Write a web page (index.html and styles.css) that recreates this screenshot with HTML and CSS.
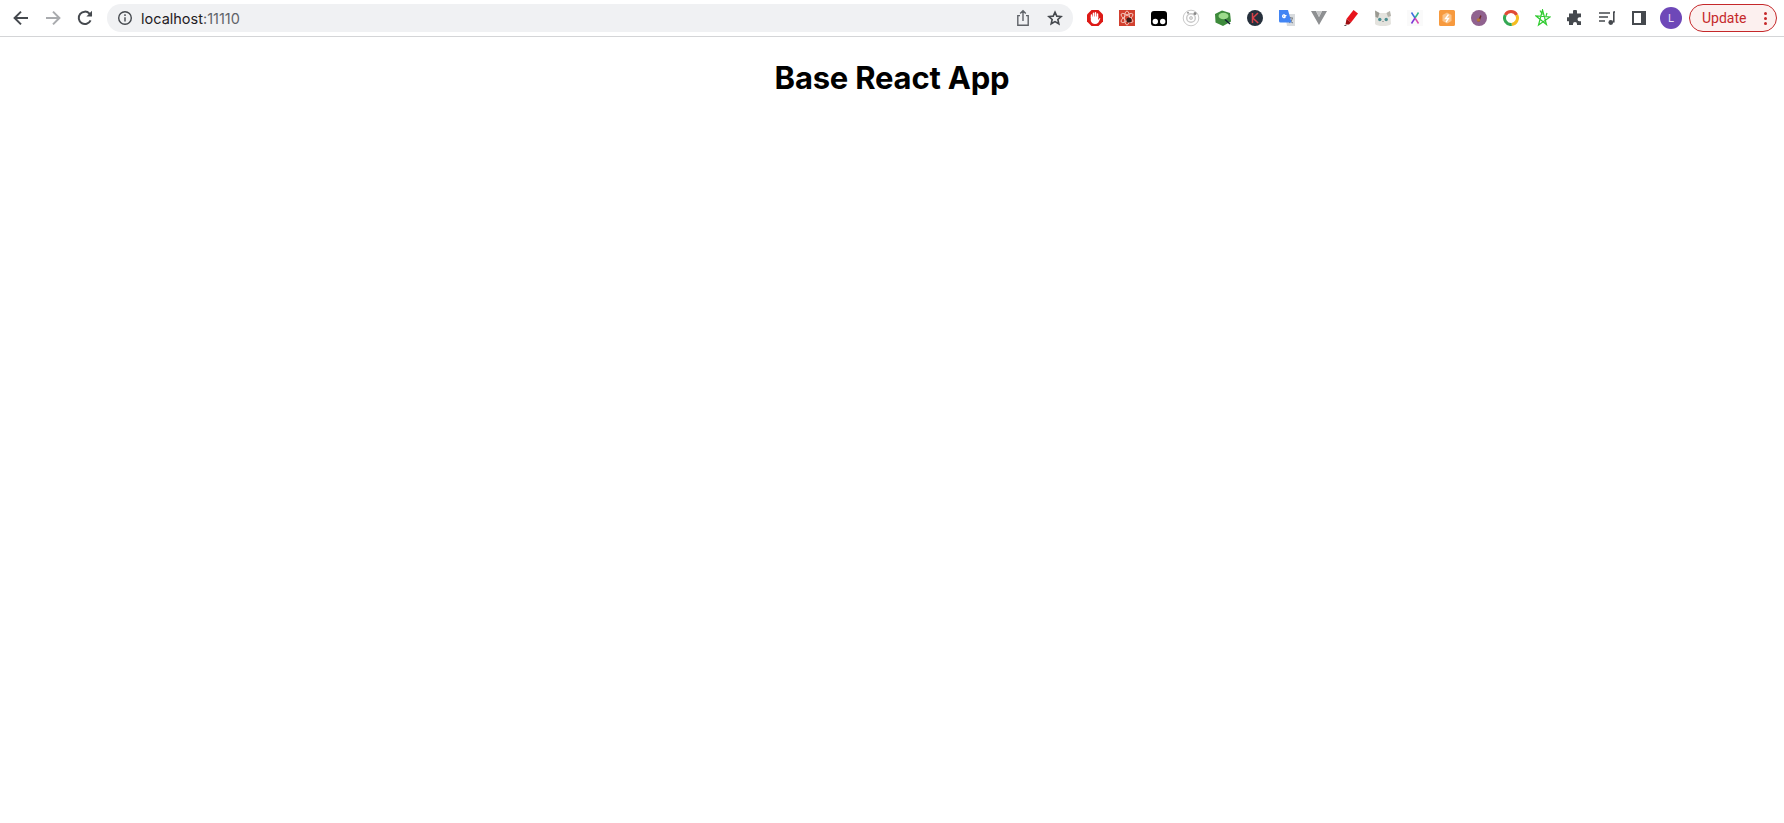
FILE: index.html
```html
<!DOCTYPE html>
<html lang="en">
<head>
    <meta charset="UTF-8">
    <title>Base React App</title>
    <link rel="stylesheet" href="styles.css">
</head>
<body>
    <div class="toolbar">
        <div class="nav">
            <span class="btn"><svg width="18" height="18" viewBox="0 0 18 18" fill="none" stroke="#45494e" stroke-width="2"><path d="M16 9H3M9 2.600 2.600 9 9 15.400"/></svg></span>
            <span class="btn"><svg width="18" height="18" viewBox="0 0 18 18" fill="none" stroke="#a9abae" stroke-width="2"><path d="M2 9h13M9 2.600 15.400 9 9 15.400"/></svg></span>
            <span class="btn"><svg width="18" height="18" viewBox="0 0 18 18" fill="none" stroke="#45494e" stroke-width="2"><path d="M14.600 11.400A6.200 6.200 0 1 1 13.500 4.600L15.600 6.600"/><path d="M16 1.800v5.600h-5.600" fill="#45494e" stroke="none"/></svg></span>
        </div>
        <div class="omnibox">
            <svg class="info" width="16" height="16" viewBox="0 0 16 16" fill="none" stroke="#45494e" stroke-width="1.400"><circle cx="8" cy="8" r="6.300"/><path d="M8 7.200v4.200M8 4.200v1.700"/></svg>
            <span class="url">localhost<span class="port">:11110</span></span>
            <span class="omni-right">
                <svg width="16" height="18" viewBox="0 0 16 18" fill="none" stroke="#5f6368" stroke-width="1.400"><path d="M5 6.600H2.800v9.600h10.400V6.600H11M8 12V2M5.200 4.600 8 1.800l2.800 2.800"/></svg>
                <svg width="16" height="16" viewBox="0 0 18 18" fill="none" stroke="#45494e" stroke-width="1.800"><path d="m9 2.400 2 4.500 4.900.5-3.700 3.300 1.100 4.800L9 13l-4.300 2.500 1.100-4.800L2.100 7.400l4.900-.5z"/></svg>
            </span>
        </div>
        <div class="extensions">
            <span class="ext"><svg width="18" height="18" viewBox="0 0 18 18"><path d="M5.500 1h7L17 5.500v7L12.500 17h-7L1 12.500v-7z" fill="#dd1a16"/><path d="M5.500 8.500V6M7.500 8V4.200M9.500 8V3.800M11.500 8.500V5" fill="none" stroke="#fff" stroke-width="1.500" stroke-linecap="round"/><path d="M4.800 7.500h7.400v3.500l1.500-2 .7.500-2 4Q11 15 9 15q-3 0-4.200-3z" fill="#fff"/></svg></span>
            <span class="ext"><svg width="16" height="16" viewBox="0 0 16 16"><path d="M0 0h16v16H0z" fill="#d2402f"/><g fill="none" stroke="#f5c9c0" stroke-width=".9"><ellipse cx="8" cy="8" rx="7" ry="2.600" transform="rotate(35 8 8)"/><ellipse cx="8" cy="8" rx="7" ry="2.600" transform="rotate(-35 8 8)"/><ellipse cx="8" cy="8" rx="7" ry="2.600" transform="rotate(90 8 8)"/></g><circle cx="10" cy="10" r="2.600" fill="#3b1c18"/></svg></span>
            <span class="ext"><svg width="18" height="16" viewBox="0 0 18 16"><path d="M4 1h10a3 3 0 0 1 3 3v9a3 3 0 0 1-3 3H4a3 3 0 0 1-3-3V4a3 3 0 0 1 3-3z" fill="#000"/><circle cx="5.300" cy="11.500" r="2.700" fill="#fff"/><circle cx="12.700" cy="11.500" r="2.700" fill="#fff"/></svg></span>
            <span class="ext"><svg width="18" height="18" viewBox="0 0 18 18" fill="none" stroke="#c9c9c9"><circle cx="9" cy="9" r="7.800"/><circle cx="9" cy="9" r="4.300" stroke-width="1.400"/><circle cx="9" cy="9" r="1.500" fill="#ddd"/><circle cx="13" cy="4.500" r="1.500" fill="#888" stroke="none"/><circle cx="6" cy="3.800" r="1" fill="#999" stroke="none"/></svg></span>
            <span class="ext"><svg width="18" height="18" viewBox="0 0 18 18"><path d="M8 1.500 16 4l1 8.500-8 4.500-7.500-3.500L1 5z" fill="#3d8a3b"/><ellipse cx="9.500" cy="7" rx="5" ry="3.200" fill="#9ddc8c"/><path d="m11 10.500 5 4.500" stroke="#123" stroke-width="1.500"/></svg></span>
            <span class="ext"><svg width="18" height="18" viewBox="0 0 18 18"><circle cx="9" cy="9" r="8" fill="#26303c"/><path d="M6.500 4v10M12 4 6.800 9l5.400 5" fill="none" stroke="#d8434a" stroke-width="1.500"/></svg></span>
            <span class="ext"><svg width="18" height="18" viewBox="0 0 18 18"><path d="M7 5h10v12H9z" fill="#d8dbde"/><path d="M10.500 9h4.500M12.700 8v1M11 14q3-1.500 3.500-5M11.500 10.500q1.500 3 3.500 3.500" fill="none" stroke="#7d8287"/><path d="M1 1h9l3.500 12.500H2.500A1.500 1.500 0 0 1 1 12z" fill="#4285f4"/><path d="M8.500 6.500H6.200v1.300h1.200a1.500 1.500 0 1 1-.5-1.800" fill="none" stroke="#fff" stroke-width="1.100"/></svg></span>
            <span class="ext"><svg width="18" height="16" viewBox="0 0 18 16"><path d="M1 1h5l3 6 3-6h5L9 15z" fill="#8e9092"/><path d="M6 1h6L9 7z" fill="#c7c8c9"/></svg></span>
            <span class="ext"><svg width="16" height="18" viewBox="0 0 16 18"><path d="m10.500 1 4.500 3.500-7 9-4.500-3.500z" fill="#e8141c"/><path d="M3.500 10 8 13.500l-2 2H2.500z" fill="#9b0d11"/><path d="M1 17h3l-2-1z" fill="#222"/></svg></span>
            <span class="ext"><svg width="18" height="18" viewBox="0 0 18 18"><path d="M1 1.500 5.500 4h7L16 2l1 13q-2 2-8 2t-8-2z" fill="#e4e3de"/><path d="M1 1.500 5.500 4 4 9 1.500 8z" fill="#9a9a92"/><path d="M16 2 12.500 4 14 8l3-1z" fill="#b5b4ac"/><circle cx="5.800" cy="10.500" r="1.700" fill="#4c8f92"/><circle cx="12.200" cy="10.500" r="1.700" fill="#4c8f92"/><path d="M9 12v1" stroke="#777"/></svg></span>
            <span class="ext"><svg width="16" height="16" viewBox="0 0 16 16"><path d="M0 0h16v16H0z" fill="#fafafa"/><path d="M4.500 2.500 8 8" stroke="#3b6be0" stroke-width="1.500"/><path d="M11.500 2.500 8 8" stroke="#2fb38a" stroke-width="1.500"/><path d="M8 8l-3.500 5.500" stroke="#7a35d8" stroke-width="1.500"/><path d="m8 8 3.500 5.500" stroke="#d84ab0" stroke-width="1.500"/></svg></span>
            <span class="ext"><svg width="16" height="16" viewBox="0 0 16 16"><path d="M1.500 0h13A1.500 1.500 0 0 1 16 1.500v13a1.500 1.500 0 0 1-1.500 1.500h-13A1.500 1.500 0 0 1 0 14.500v-13A1.500 1.500 0 0 1 1.500 0z" fill="#f79a3e"/><path d="M8 2.500 12.500 5v6L8 13.500 3.500 11V5z" fill="#fbc48a"/><path d="M9.500 4.500 6.500 8.500H9.500L7 12" fill="none" stroke="#fff" stroke-width="1.300"/></svg></span>
            <span class="ext"><svg width="16" height="16" viewBox="0 0 16 16"><circle cx="8" cy="8" r="8" fill="#90628f"/><path d="M6.500 11.500 9.500 5l1 1-2 5.500z" fill="#6d2a2a"/><circle cx="7.500" cy="10" r="1.800" fill="#b5773a"/></svg></span>
            <span class="ext"><svg width="16" height="16" viewBox="0 0 16 16" fill="none" stroke-width="3"><path d="M2.300 5A6.500 6.500 0 0 1 13.700 5" stroke="#e04a35"/><path d="M13.700 5a6.500 6.500 0 0 1-5 9.500" stroke="#f5bd1f"/><path d="M8.700 14.500A6.500 6.500 0 0 1 2.300 5" stroke="#34a853"/></svg></span>
            <span class="ext"><svg width="16" height="18" viewBox="0 0 16 18" fill="none" stroke="#2ecb2e" stroke-width="1.200"><path d="M7.500 1 11.500 15.500 1 7 15 8 3.500 16zM7.500 5.500 5 1.500M12 4l-1 3"/></svg></span>
            <span class="ext"><svg width="16" height="16" viewBox="0 0 16 16"><path d="M6 1.500a2 2 0 0 1 4 0V3.500h4v3.800h-1.500a2 2 0 0 0 0 4H14V15H10v-1a2 2 0 0 0-4 0v1H2v-3.800H1a2 2 0 0 1 0-4h1V3.500h4z" fill="#45494e"/></svg></span>
            <span class="ext"><svg width="18" height="16" viewBox="0 0 18 16" fill="none" stroke="#45494e" stroke-width="1.300"><path d="M1 3h11M1 7h9M1 11h6"/><path d="M15.800 1.500v11" stroke-width="1.600"/><circle cx="12.800" cy="12.500" r="2.400" fill="#45494e" stroke="none"/><path d="M15.800 2H17"/></svg></span>
            <span class="ext"><svg width="16" height="16" viewBox="0 0 16 16"><path d="M1 1h14v14H1z" fill="#45494e"/><path d="M3 3h7v10H3z" fill="#fff"/></svg></span>
            <span class="ext"><span class="avatar">L</span></span>
        </div>
        <div class="update">
            <span>Update</span>
            <span class="dots"><i></i><i></i><i></i></span>
        </div>
    </div>
    <h1>Base React App</h1>
</body>
</html>
```

FILE: styles.css
```css
body {
    font-family: 'Inter', 'Liberation Sans', sans-serif;
    background-color: #fff;
    color: #000;
    margin: 0;
}

.toolbar {
    display: flex;
    align-items: center;
    height: 36px;
    padding: 0 7px 0 5px;
    border-bottom: 1px solid #d4d5d7;
}

.nav {
    display: flex;
}

.btn {
    display: flex;
    align-items: center;
    justify-content: center;
    width: 32px;
    height: 32px;
}

.omnibox {
    display: flex;
    align-items: center;
    width: 966px;
    height: 28px;
    margin-left: 6px;
    padding: 0 8px 0 10px;
    box-sizing: border-box;
    background-color: #f0f1f3;
    border-radius: 14px;
}

.url {
    margin-left: 8px;
    font-size: 14.5px;
    color: #1f2023;
}

.port {
    color: #5f6368;
}

.omni-right {
    display: flex;
    align-items: center;
    gap: 16px;
    margin-left: auto;
    padding-right: 2px;
}

.extensions {
    display: flex;
    margin-left: 6px;
}

.ext {
    display: flex;
    align-items: center;
    justify-content: center;
    width: 32px;
    height: 32px;
}

.avatar {
    display: flex;
    align-items: center;
    justify-content: center;
    width: 22px;
    height: 22px;
    border-radius: 50%;
    background-color: #6e48b8;
    color: #e9e2f6;
    font-size: 11px;
}

.update {
    display: flex;
    align-items: center;
    justify-content: space-between;
    width: 88px;
    height: 28px;
    margin-left: 2px;
    padding: 0 9px 0 12px;
    box-sizing: border-box;
    border: 1px solid #c5282a;
    border-radius: 14px;
    background-color: #fcf0ef;
    color: #c5282a;
    font-family: 'Roboto', sans-serif;
    font-size: 14px;
}

.dots {
    display: flex;
    flex-direction: column;
    gap: 2px;
}

.dots i {
    width: 3px;
    height: 3px;
    border-radius: 50%;
    background-color: #c5282a;
}

h1 {
    margin: 22px 0 0;
    font-size: 31px;
    line-height: 37px;
    font-weight: 700;
    letter-spacing: -0.2px;
    text-align: center;
}
```
